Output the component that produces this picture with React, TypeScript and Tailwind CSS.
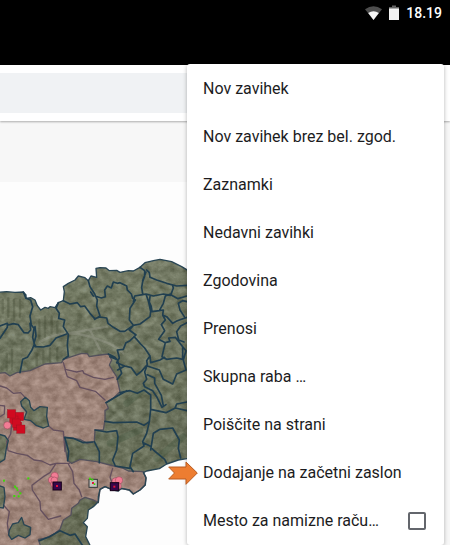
const menuItems = [
  'Nov zavihek',
  'Nov zavihek brez bel. zgod.',
  'Zaznamki',
  'Nedavni zavihki',
  'Zgodovina',
  'Prenosi',
  'Skupna raba …',
  'Poiščite na strani',
  'Dodajanje na začetni zaslon',
];

const northLand =
  'M-5 877 L20 875 45 877 70 876 78 885 78 895 92 893 105 900 112 917 122 930 135 922 145 925 150 920 165 923 175 908 190 902 193 875 190 860 205 850 225 840 235 828 255 833 265 842 273 828 290 832 288 805 300 803 318 804 328 812 350 811 360 817 385 812 400 813 420 802 435 788 460 782 480 778 515 785 545 800 565 812 565 1375 535 1380 500 1392 478 1406 440 1413 430 1418 438 1432 436 1455 420 1470 400 1482 388 1470 365 1465 355 1473 340 1470 315 1460 300 1468 295 1490 295 1505 280 1520 265 1530 262 1555 250 1568 262 1580 257 1610 272 1640 -5 1640Z';

const coalition =
  'M-5 1120 L15 1118 30 1128 50 1118 90 1112 135 1092 185 1088 190 1078 215 1070 245 1060 262 1061 268 1070 300 1065 325 1062 335 1080 328 1095 340 1115 350 1130 360 1175 340 1195 318 1208 325 1225 315 1232 315 1260 310 1290 285 1290 283 1325 262 1330 240 1318 195 1312 197 1350 203 1382 215 1390 240 1378 290 1385 330 1395 370 1405 385 1413 430 1415 438 1435 435 1455 420 1470 400 1482 388 1470 365 1466 340 1471 315 1460 300 1468 295 1508 280 1500 255 1492 240 1500 235 1510 215 1525 213 1545 190 1560 180 1588 165 1600 150 1610 130 1615 115 1618 122 1640 -5 1640Z';

const islands =
  'M65 1218 L62 1205 76 1192 88 1202 92 1222 102 1232 120 1220 142 1222 140 1250 146 1278 130 1284 108 1276 92 1262 72 1258 80 1236Z M-5 1302 L15 1308 25 1322 19 1345 14 1378 -5 1390Z M-5 1456 L12 1462 15 1490 10 1524 -5 1522Z M28 1590 L38 1572 55 1568 65 1552 72 1574 92 1582 90 1604 75 1614 55 1606 35 1618 26 1605Z';

const townBorders =
  'M70 876 L78 895 92 900 98 920 90 948 94 975 102 985 98 1012 105 1040 M0 978 L22 970 25 975 40 971 55 974 72 998 84 999 92 990 90 970 M22 970 L22 982 10 1000 0 1015 M105 980 L108 1008 102 1030 108 1040 130 1041 150 1036 168 1014 200 1002 M103 1032 L96 1050 82 1072 68 1078 60 1118 M175 908 L168 925 178 940 176 955 194 960 190 980 205 1003 202 1035 205 1068 190 1078 M190 902 L210 912 232 908 242 920 254 918 270 940 284 956 300 951 320 954 324 970 340 982 360 994 374 994 390 983 400 976 M265 842 L270 860 284 882 292 900 290 918 300 948 284 958 M272 876 L280 888 M285 888 L304 894 316 890 314 870 322 858 334 864 340 846 352 850 360 848 380 858 382 870 394 882 398 895 406 900 390 925 388 960 400 976 M400 976 L388 990 408 1005 390 1022 378 1028 370 1048 352 1050 358 1074 350 1088 374 1098 394 1103 410 1125 424 1114 442 1094 440 1082 450 1068 434 1044 422 1032 410 1018 402 1010 M400 976 L420 972 450 950 452 935 446 906 438 882 428 884 404 888 400 906 M420 802 L434 812 434 828 428 845 425 862 428 882 M440 810 L448 818 450 832 470 840 500 850 530 858 561 856 M438 816 L428 842 M438 882 L460 888 490 882 512 886 520 864 518 857 M450 890 L448 906 454 920 456 935 478 932 490 910 496 888 512 882 M478 932 L490 930 488 945 500 950 518 970 532 962 561 952 M512 884 L534 896 561 888 M561 905 L548 902 535 910 540 930 553 950 M488 945 L496 960 484 974 494 992 476 1018 496 1028 510 1024 506 1014 526 1012 548 1040 548 1078 530 1074 500 1078 486 1070 496 1028 M450 1068 L452 1088 480 1080 494 1072 M561 968 L542 978 530 995 536 1020 552 1026 M548 1040 L558 1052 550 1080 558 1110 530 1122 518 1152 490 1138 478 1110 442 1098 M442 1094 L434 1116 440 1138 430 1150 434 1160 458 1172 470 1190 486 1222 498 1214 M325 1062 L345 1072 352 1080 365 1120 352 1138 M330 1070 L354 1080 M353 1110 L374 1098 M442 1124 L464 1134 464 1150 484 1186 490 1218 M360 1178 L390 1172 412 1180 432 1170 452 1185 452 1228 498 1238 526 1224 561 1232 M318 1208 L340 1195 380 1172 M315 1264 L340 1268 410 1266 432 1276 448 1265 452 1228 M285 1290 L320 1296 350 1292 354 1310 350 1350 338 1380 346 1398 390 1405 M283 1325 L298 1355 298 1388 M203 1382 L206 1354 194 1312 220 1315 250 1328 278 1326 M448 1265 L440 1300 428 1325 432 1338 398 1360 390 1400 400 1415 M430 1328 L450 1338 460 1350 494 1378 500 1390 M452 1350 L460 1300 480 1288 518 1284 538 1320 535 1345 542 1374 M526 1222 L530 1212 561 1206';

const coalitionBorders =
  'M0 1158 L20 1164 40 1180 62 1178 75 1192 M190 1088 L196 1108 230 1116 248 1112 252 1120 280 1132 315 1138 340 1132 M195 1108 L202 1130 230 1142 240 1162 286 1174 315 1200 M0 1216 L14 1218 13 1242 0 1250 M35 1275 L32 1302 20 1325 24 1352 50 1360 82 1366 102 1380 125 1383 150 1395 168 1390 208 1390 M168 1390 L150 1418 130 1430 96 1456 97 1470 120 1505 122 1530 145 1558 182 1548 M205 1392 L218 1415 222 1450 238 1470 245 1490 M10 1515 L28 1535 22 1570 26 1602 M338 1405 L330 1432 335 1445 M146 1278 L160 1290 190 1294 195 1355';

function RegionMap() {
  return (
    <svg className="block h-[363px] w-[187px]" viewBox="0 546 561 1089" role="img" aria-label="Zemljevid občin">
      <defs>
        <filter id="terrain" x="0" y="0" width="100%" height="100%" colorInterpolationFilters="sRGB">
          <feTurbulence type="fractalNoise" baseFrequency="0.04 0.05" numOctaves="4" seed="8" result="noise" />
          <feColorMatrix
            in="noise"
            values="1.2 0.6 0 0 -0.3 1.2 0.6 0 0 -0.32 1.2 0.6 0 0 -0.4 0 0 0 0 0.2"
            result="grey"
          />
          <feComposite in="grey" in2="SourceGraphic" operator="in" result="grain" />
          <feMerge>
            <feMergeNode in="SourceGraphic" />
            <feMergeNode in="grain" />
          </feMerge>
        </filter>
        <linearGradient id="greens" x1="0" y1="0" x2="0" y2="1">
          <stop offset="0" stopColor="#6c755e" />
          <stop offset="0.5" stopColor="#626c56" />
          <stop offset="1" stopColor="#59614b" />
        </linearGradient>
        <clipPath id="land">
          <path d={northLand} />
        </clipPath>
      </defs>
      <path d={northLand} fill="url(#greens)" filter="url(#terrain)" />
      <g clipPath="url(#land)" fill="none" strokeLinecap="round">
        <path
          d="M8 900v40M25 895v55M42 900v60M60 900v50M118 960v55M135 950v60M155 950v48M172 965v35M20 1060v50M36 1050v58M110 1060v35M130 1055v35M150 1045v40M172 1045v38"
          stroke="#39422b"
          strokeWidth="7"
          opacity="0.28"
        />
        <path d="M120 1025 Q190 985 270 1010 T370 1060M205 1000L320 980M270 990L300 1050" stroke="#a9a8a0" strokeWidth="7" opacity="0.3" />
        <path d="M330 1330L420 1290M380 1210L440 1160M470 1375L550 1310" stroke="#334a35" strokeWidth="20" opacity="0.25" />
      </g>
      <path d={coalition} fill="#a08179" filter="url(#terrain)" />
      <path d={islands} fill="#626b54" filter="url(#terrain)" />
      <g fill="none" strokeLinejoin="round" strokeLinecap="round">
        <path d={coalitionBorders} stroke="#65505e" strokeWidth="4" />
        <path d={coalition} stroke="#54515c" strokeWidth="4" />
        <path d={northLand} stroke="#294553" strokeWidth="4" />
        <path d={islands} stroke="#294553" strokeWidth="4" />
        <path d={townBorders} stroke="#213f50" strokeWidth="5" />
        <path d="M118 1622 L148 1610 180 1592 210 1606 225 1602 250 1640" stroke="#213f50" strokeWidth="5" />
      </g>
      <g fill="#d00a20" stroke="#8f1420" strokeWidth="1">
        <rect x="46" y="1237" width="25" height="25" />
        <rect x="29" y="1248" width="25" height="25" />
        <rect x="22" y="1229" width="25" height="25" />
        <rect x="40" y="1266" width="25" height="25" />
        <rect x="37" y="1257" width="25" height="25" />
        <rect x="50" y="1275" width="25" height="25" />
      </g>
      <g fill="#f27c94" stroke="#8b4555" strokeWidth="1.5">
        <circle cx="22" cy="1276" r="11" />
        <circle cx="164" cy="1428" r="11" />
        <circle cx="155" cy="1440" r="10" />
        <circle cx="163" cy="1452" r="11" />
        <circle cx="163" cy="1441" r="10" />
        <circle cx="347" cy="1444" r="11" />
        <circle cx="357" cy="1441" r="11" />
        <circle cx="354" cy="1458" r="10" />
      </g>
      <g fill="#37074a" stroke="#160019" strokeWidth="3">
        <rect x="159" y="1446" width="25" height="24" />
        <rect x="331" y="1448" width="25" height="24" />
      </g>
      <rect x="267" y="1438" width="25" height="24" fill="#c4c1bd" stroke="#303536" strokeWidth="3" />
      <g fill="#e31239">
        <rect x="168" y="1455" width="6" height="6" />
        <rect x="340" y="1457" width="6" height="6" />
        <rect x="276" y="1446" width="6" height="6" />
      </g>
      <g fill="#3ed70a">
        <rect x="9" y="1439" width="6" height="6" />
        <rect x="82" y="1432" width="6" height="6" />
        <rect x="42" y="1457" width="6" height="6" />
        <rect x="47" y="1462" width="6" height="6" />
        <rect x="50" y="1468" width="5" height="5" />
        <rect x="58" y="1477" width="6" height="6" />
        <rect x="40" y="1485" width="6" height="6" />
        <rect x="53" y="1486" width="6" height="6" />
        <rect x="267" y="1433" width="6" height="6" />
        <rect x="274" y="1436" width="6" height="6" />
        <rect x="281" y="1450" width="5" height="5" />
      </g>
    </svg>
  );
}

function StatusBar() {
  return (
    <header className="flex h-[65px] items-start justify-end bg-black pr-2 text-white">
      <div className="flex h-[26px] items-center gap-[7px]">
        <svg className="h-4 w-[17px]" viewBox="0 0 17 16" aria-label="Wi-Fi">
          <path d="M0 4.2Q8.5-1.8 17 4.2L8.5 15Z" fill="#4d4d4d" />
          <path d="M3.2 8.1Q8.5 4.6 13.8 8.1L8.5 15Z" fill="#f5f5f5" />
        </svg>
        <svg className="h-4 w-[10px]" viewBox="0 0 10 16" aria-label="Baterija">
          <path d="M3 0.5h4v1.5h3v3H0V2h3Z" fill="#626262" />
          <path d="M0 3.5h10V15H0Z" fill="#f2f2f2" />
        </svg>
        <time className="text-sm leading-5 font-medium">18.19</time>
      </div>
    </header>
  );
}

export default function App() {
  return (
    <div className="relative flex min-h-screen flex-col overflow-hidden bg-[#f7f7f7] font-[Roboto,sans-serif]">
      <StatusBar />
      <div className="bg-white py-2 pr-4 shadow-[0_1px_2px_rgba(0,0,0,0.3)]">
        <input aria-label="Naslov" className="block h-10 w-full bg-[#f0f2f4] outline-none" />
      </div>
      <main className="mt-[61px] mr-1.5 flex-1 bg-[#fdfdfd]">
        <RegionMap />
      </main>

      <nav className="absolute top-16 right-1.5 w-[257px] rounded-[3px] bg-white pt-px shadow-[0_1px_4px_rgba(0,0,0,0.3)]">
        {menuItems.map((item) => (
          <button key={item} type="button" className="flex h-12 w-full items-center px-4 text-left text-base whitespace-nowrap text-[#1c1c1e]">
            {item}
          </button>
        ))}
        <label className="flex h-12 items-center justify-between pr-[18px] pl-4 text-base text-[#1c1c1e]">
          Mesto za namizne raču…
          <input type="checkbox" className="size-[18px] appearance-none rounded-xs border-2 border-[#63666c] bg-white" />
        </label>
      </nav>

      <svg className="absolute top-[461px] right-[252px] h-6 w-[30px]" viewBox="0 0 30 24" aria-hidden="true">
        <path d="M0.7 6H18V1L29.3 12 18 23.3V18H0.7L6.5 12Z" fill="#ed7d31" stroke="#b85b20" />
      </svg>
    </div>
  );
}
